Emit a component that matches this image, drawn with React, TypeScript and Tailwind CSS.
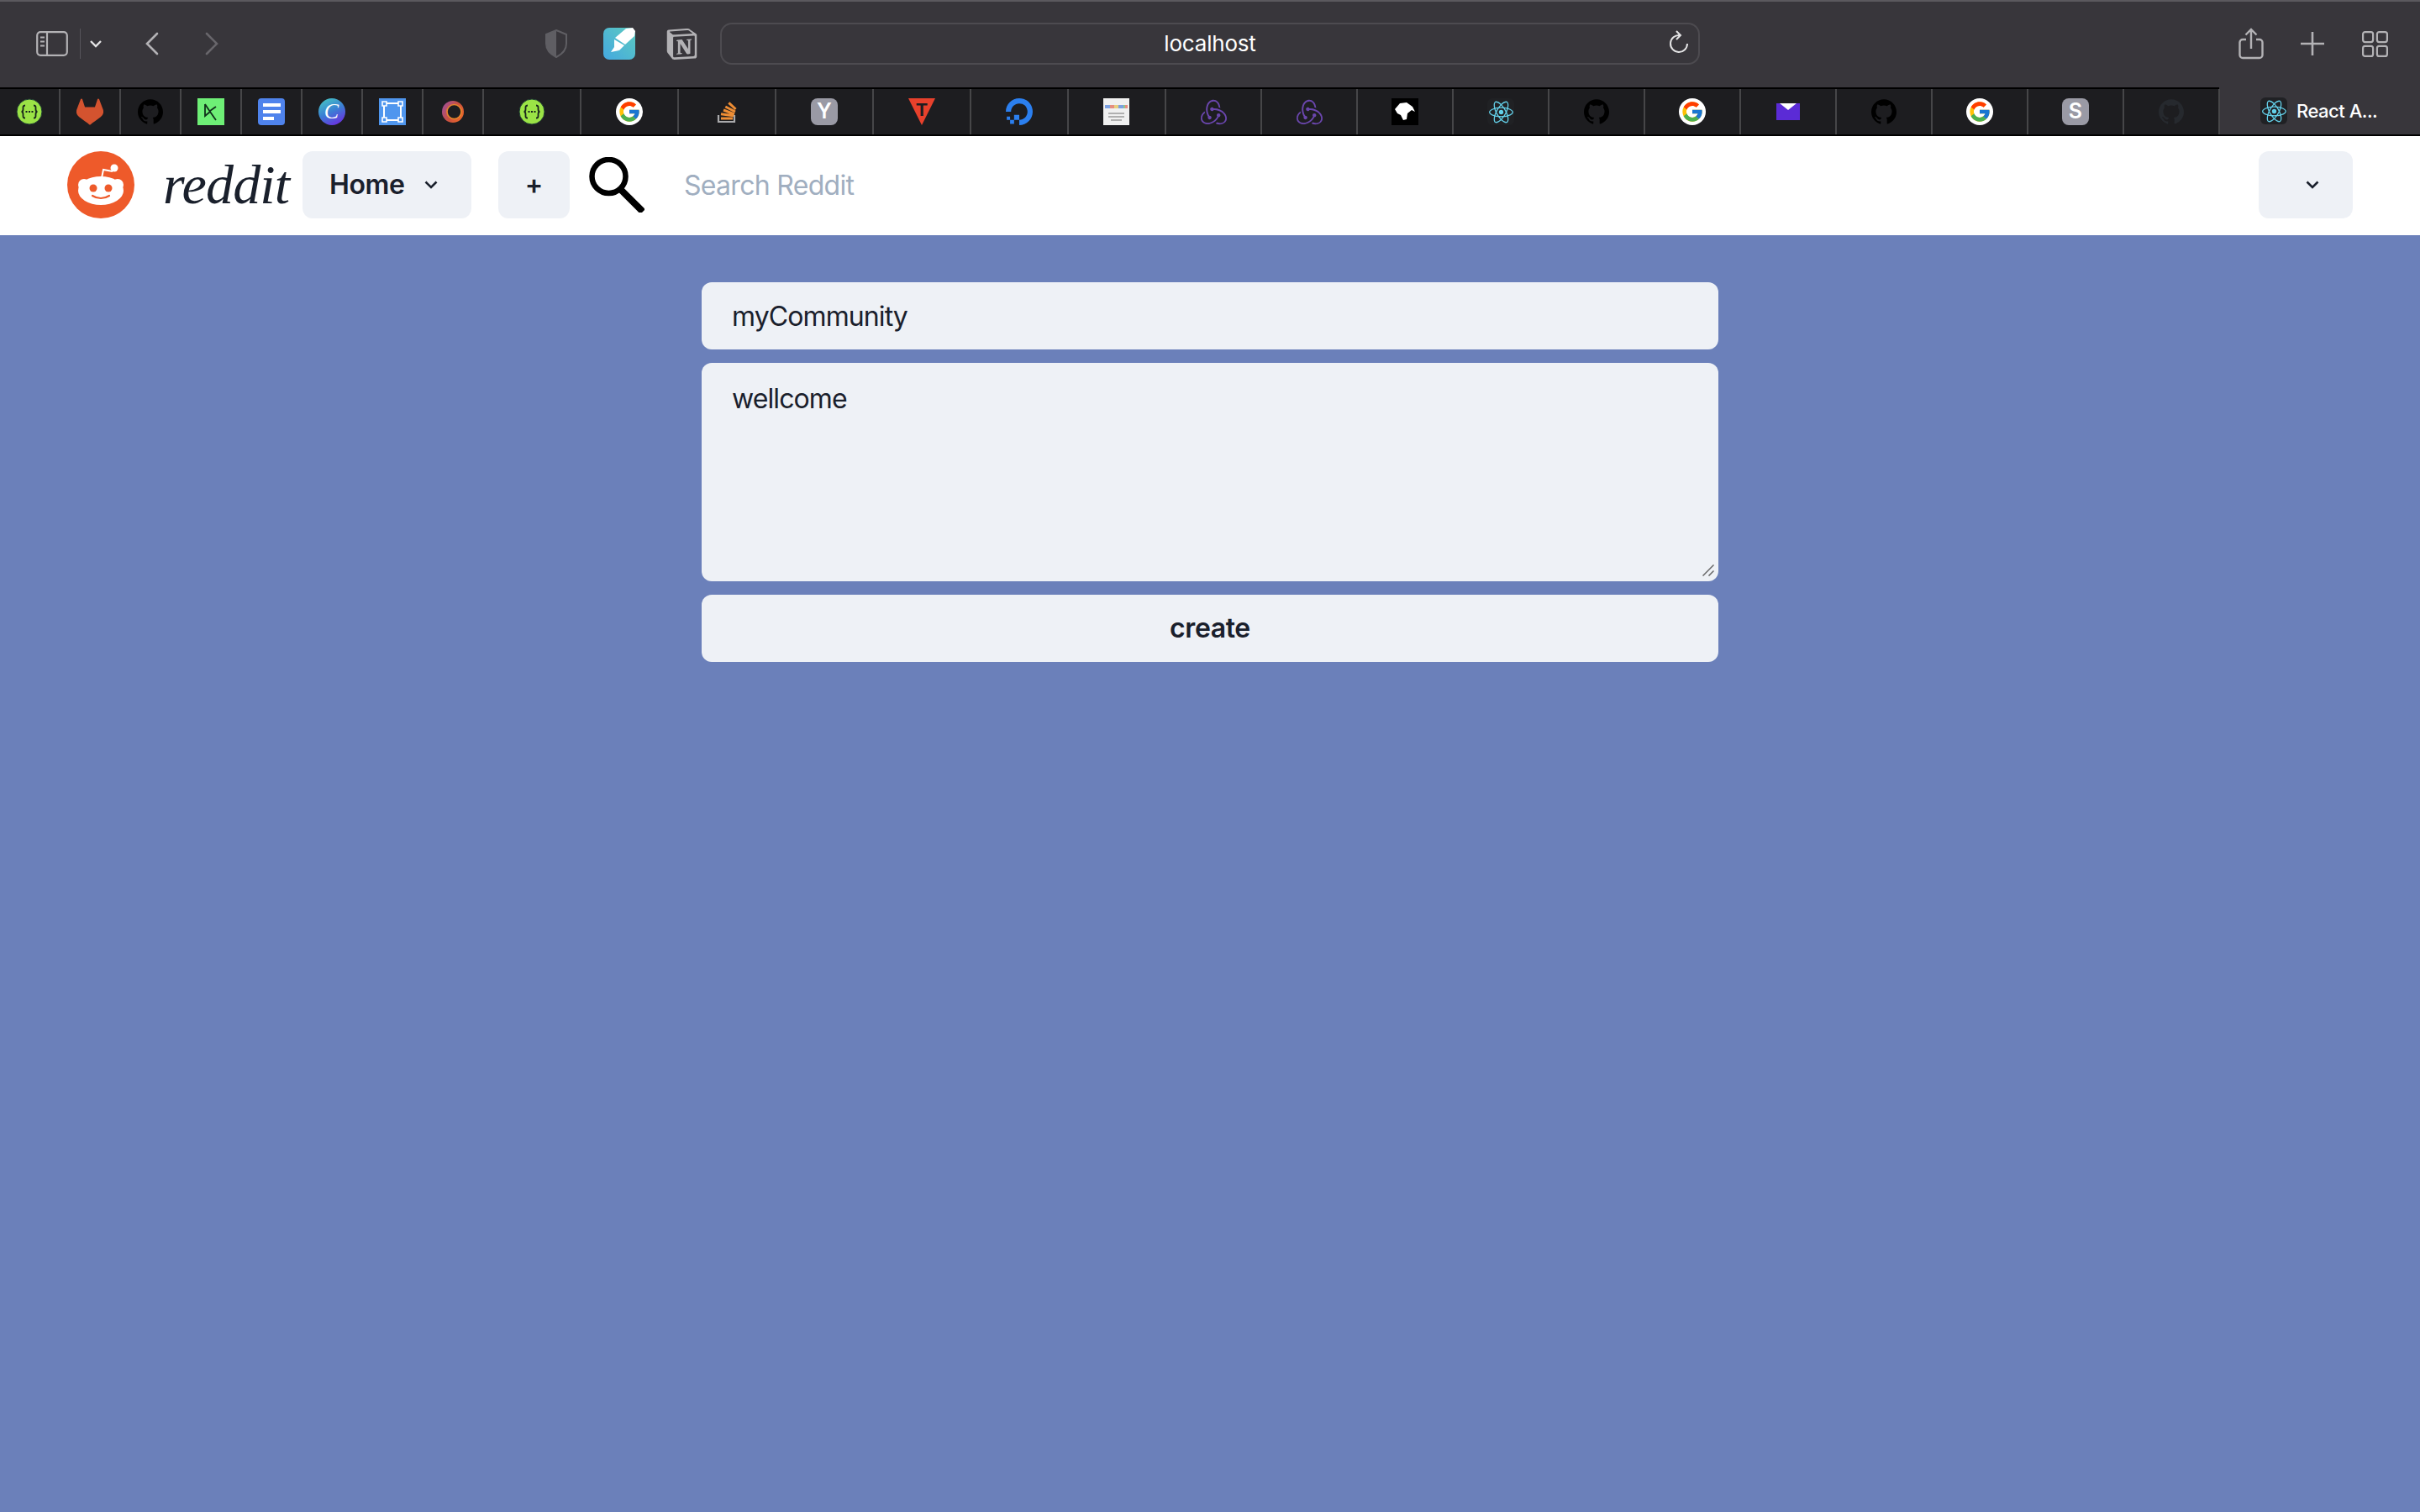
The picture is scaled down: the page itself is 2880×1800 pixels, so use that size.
import React from "react";
import { FcGoogle } from "react-icons/fc";
import { SiDigitalocean, SiGithub, SiGitlab, SiNotion, SiReact, SiRedux } from "react-icons/si";

const fieldClass =
  "block w-full rounded-xl bg-[#eef1f6] px-9 text-[32px] tracking-[-0.9px] text-[#1a202c] outline-none";

const Google = () => (
  <div className="flex h-8 w-8 items-center justify-center rounded-full bg-white">
    <FcGoogle size={28} />
  </div>
);

const Letter = ({ children }: { children: string }) => (
  <div className="flex h-8 w-8 items-center justify-center rounded-lg bg-[#9a9aa5] text-[25px] font-semibold text-white">
    {children}
  </div>
);

const Swagger = () => (
  <svg width="32" height="32" viewBox="0 0 32 32">
    <circle cx="16" cy="16" r="15" fill="#9be346" stroke="#1e3a34" strokeWidth="1" />
    <path
      d="M11 8.500c-3 0-2.500 2-2.500 4.500 0 2-.5 3-2 3 1.500 0 2 1 2 3 0 2.500-.5 4.500 2.500 4.500M21 8.500c3 0 2.500 2 2.500 4.500 0 2 .5 3 2 3-1.500 0-2 1-2 3 0 2.500.5 4.500-2.500 4.500"
      fill="none"
      stroke="#18231c"
      strokeWidth="1.800"
    />
    <path d="M11.500 15h2v2h-2zM15 15h2v2h-2zM18.500 15h2v2h-2z" fill="#18231c" />
  </svg>
);

const Github = ({ color = "#000000" }: { color?: string }) => <SiGithub size={30} color={color} />;
const Redux = () => <SiRedux size={31} color="#6a46ad" />;

const ReactLogo = () => (
  <div className="flex h-8 w-8 items-center justify-center rounded-md bg-[#202124]">
    <SiReact size={29} color="#63cfe8" />
  </div>
);

const Dk = () => (
  <svg width="32" height="32" viewBox="0 0 32 32">
    <rect width="32" height="32" fill="#6eef76" />
    <path d="M9 7v14l6-5-6-9M15 16l7 10M15 15l7-5" fill="none" stroke="#10301a" strokeWidth="1.8" />
  </svg>
);

const Docs = () => (
  <svg width="32" height="32" viewBox="0 0 32 32">
    <rect width="32" height="32" rx="4" fill="#4f83ec" />
    <path d="M6 6h21v4H6zM6 14h21v4H6zM6 22h13v4H6z" fill="#fff" />
  </svg>
);

const Canva = () => (
  <svg width="32" height="32" viewBox="0 0 32 32">
    <defs>
      <linearGradient id="canva" x1="0.2" y1="0" x2="0.7" y2="1">
        <stop offset="0" stopColor="#45c4c4" />
        <stop offset="0.5" stopColor="#3b7fd4" />
        <stop offset="1" stopColor="#6a2fe0" />
      </linearGradient>
    </defs>
    <circle cx="16" cy="16" r="16" fill="url(#canva)" />
    <text x="15.500" y="24" textAnchor="middle" fontFamily="Liberation Serif" fontStyle="italic" fontSize="26" fill="#fff">
      C
    </text>
  </svg>
);

const Frame = () => (
  <svg width="32" height="32" viewBox="0 0 32 32">
    <rect width="32" height="32" fill="#4f96ee" />
    <rect x="6" y="6" width="20" height="20" fill="none" stroke="#fff" strokeWidth="2" />
    <path d="M4 4h5v5H4zM23 4h5v5h-5zM4 23h5v5H4zM23 23h5v5h-5z" fill="#4f96ee" stroke="#fff" strokeWidth="1.600" />
  </svg>
);

const Ring = () => (
  <svg width="32" height="32" viewBox="0 0 32 32">
    <defs>
      <linearGradient id="ring" x1="0" y1="0" x2="1" y2="0.6">
        <stop offset="0" stopColor="#9a4fa8" />
        <stop offset="0.6" stopColor="#c9503f" />
        <stop offset="1" stopColor="#e8652c" />
      </linearGradient>
    </defs>
    <circle cx="16" cy="16" r="13" fill="url(#ring)" />
    <circle cx="17.500" cy="16" r="8.500" fill="#1d1d20" stroke="#e8872c" strokeWidth="1.600" />
  </svg>
);

const Stack = () => (
  <svg width="32" height="32" viewBox="0 0 32 32">
    <path d="M6 20v8h19v-8" fill="none" stroke="#a9a9ab" strokeWidth="2.200" />
    <path d="M9 24h14M9 18.700l15 2M12 14l13 5M14.300 10L26 16M18.300 5.300l8.300 7.700" fill="none" stroke="#ee8d34" strokeWidth="3" />
  </svg>
);

const TriangleT = () => (
  <svg width="32" height="32" viewBox="0 0 32 32">
    <path d="M0 0h32L16 32z" fill="#e8412c" />
    <text x="16" y="20.500" textAnchor="middle" fontFamily="Liberation Sans" fontWeight="700" fontSize="22" fill="#1d1d20">
      T
    </text>
  </svg>
);

const CustomSearch = () => (
  <svg width="32" height="32" viewBox="0 0 32 32">
    <rect width="31" height="32" fill="#f0f0f0" />
    <path d="M2 10h6" stroke="#7ca0e0" strokeWidth="4" />
    <path d="M8 10h5" stroke="#e58d80" strokeWidth="4" />
    <path d="M13 10h5" stroke="#e8cf7e" strokeWidth="4" />
    <path d="M18 10h6" stroke="#7ca0e0" strokeWidth="4" />
    <path d="M24 10h2" stroke="#8cc890" strokeWidth="4" />
    <path d="M26 10h3" stroke="#e58d80" strokeWidth="4" />
    <path d="M6 18h19M6 22h19M9 26h13" stroke="#b0b0b0" strokeWidth="2" />
  </svg>
);

const Silhouette = () => (
  <svg width="32" height="32" viewBox="0 0 32 32">
    <rect width="32" height="32" fill="#000" />
    <path d="M4 13l6-7 8-1 7 5 3 6-4-2-5 4-1 7-4 1-3-6-4-2z" fill="#fff" />
  </svg>
);

const Mail = () => (
  <svg width="32" height="32" viewBox="0 0 32 32">
    <rect x="2" y="6" width="28" height="20" fill="#5b2bd6" />
    <path d="M6 6h20l-10 8z" fill="#fff" />
  </svg>
);

const wide = "w-[116px]";
const mid = "w-[114px]";
const narrow = "w-[72px]";

const tabs: { width: string; icon: React.ReactNode }[] = [
  { width: narrow, icon: <Swagger /> },
  { width: narrow, icon: <SiGitlab size={32} color="#d4532f" /> },
  { width: narrow, icon: <Github /> },
  { width: narrow, icon: <Dk /> },
  { width: narrow, icon: <Docs /> },
  { width: narrow, icon: <Canva /> },
  { width: narrow, icon: <Frame /> },
  { width: narrow, icon: <Ring /> },
  { width: wide, icon: <Swagger /> },
  { width: wide, icon: <Google /> },
  { width: wide, icon: <Stack /> },
  { width: wide, icon: <Letter>Y</Letter> },
  { width: wide, icon: <TriangleT /> },
  { width: wide, icon: <SiDigitalocean size={32} color="#2b7fef" /> },
  { width: wide, icon: <CustomSearch /> },
  { width: mid, icon: <Redux /> },
  { width: mid, icon: <Redux /> },
  { width: mid, icon: <Silhouette /> },
  { width: mid, icon: <ReactLogo /> },
  { width: mid, icon: <Github /> },
  { width: mid, icon: <Google /> },
  { width: mid, icon: <Mail /> },
  { width: mid, icon: <Github /> },
  { width: mid, icon: <Google /> },
  { width: mid, icon: <Letter>S</Letter> },
  { width: mid, icon: <Github color="#26292e" /> },
];

const Chevron = ({ className }: { className?: string }) => (
  <svg width="16" height="10" viewBox="0 0 16 10" className={className}>
    <path d="M1.500 1.500L8 8l6.500-6.500" fill="none" stroke="#1a202c" strokeWidth="2.600" />
  </svg>
);

const Toolbar = () => (
  <div className="flex h-[104px] items-center border-t-2 border-[#5b595e] bg-[#38363b] pb-[2px] text-[#b3b2b5]">
    {/* sidebar toggle */}
    <svg width="38" height="30" viewBox="0 0 38 30" className="ml-[43px]" fill="none" stroke="currentColor" strokeWidth="2.200">
      <rect x="1.200" y="1.200" width="35.600" height="27.600" rx="4" />
      <path d="M13 1v28M5 7.500h5M5 12.500h5M5 17.500h5" />
    </svg>
    <div className="ml-[14px] h-9 w-px bg-[#56545a]" />
    <svg width="14" height="9" viewBox="0 0 14 9" className="ml-[11px]" fill="none" stroke="#e4e4e5" strokeWidth="2.400">
      <path d="M1 1l6 6 6-6" />
    </svg>
    <svg width="16" height="28" viewBox="0 0 16 28" className="ml-[52px]" fill="none" stroke="currentColor" strokeWidth="2.600" strokeLinecap="round">
      <path d="M14 2L2 14l12 12" />
    </svg>
    <svg width="16" height="28" viewBox="0 0 16 28" className="ml-[55px]" fill="none" stroke="#68666b" strokeWidth="2.600" strokeLinecap="round">
      <path d="M2 2l12 12L2 26" />
    </svg>
    {/* shield */}
    <svg width="28" height="34" viewBox="0 0 28 34" className="ml-[388px]">
      <path d="M14 1l12 5v11c0 8-6 13-12 16C8 30 2 25 2 17V6z" fill="none" stroke="#5f5e63" strokeWidth="2" />
      <path d="M14 1L2 6v11c0 8 6 13 12 16z" fill="#5f5e63" />
    </svg>
    {/* markup extension */}
    <svg width="38" height="38" viewBox="0 0 38 38" className="ml-[42px]">
      <defs>
        <linearGradient id="markup" x1="1" y1="0" x2="0" y2="1">
          <stop offset="0" stopColor="#5ccbc0" />
          <stop offset="1" stopColor="#45a8e0" />
        </linearGradient>
      </defs>
      <rect width="38" height="38" rx="7" fill="url(#markup)" />
      <path d="M27 1l8-1 3 4-1 6-11 10-12-8z" fill="#fff" />
      <path d="M13 14l12 7-6 6-6-3z" fill="#fff" />
      <path d="M13 23l6 4-10 2z" fill="#fff" />
    </svg>
    <SiNotion size={37} className="ml-[37px]" />
    {/* address bar */}
    <div className="relative ml-[27px] flex h-[50px] w-[1166px] items-center justify-center rounded-[14px] border-2 border-[#4d4b50] pb-[2px]">
      <span className="text-[26px] tracking-[-0.2px] text-white">localhost</span>
      <svg width="24" height="28" viewBox="0 0 24 28" className="absolute right-[11px] top-[7px]" fill="none" stroke="#e4e4e5" strokeWidth="2">
        <path d="M13 6a10 10 0 1 0 9 10" />
        <path d="M9 1l5 5-5 5" />
      </svg>
    </div>
    <div className="ml-auto flex items-center">
      <svg width="30" height="38" viewBox="0 0 30 38" fill="none" stroke="currentColor" strokeWidth="2.400">
        <path d="M9 14H5a3.500 3.500 0 0 0-3.500 3.500v15A3.500 3.500 0 0 0 5 36h20a3.500 3.500 0 0 0 3.500-3.500v-15A3.500 3.500 0 0 0 25 14h-4" />
        <path d="M15 25V2M8.500 8.500L15 2l6.500 6.500" />
      </svg>
      <svg width="28" height="28" viewBox="0 0 28 28" className="ml-[44px]" stroke="currentColor" strokeWidth="2.600">
        <path d="M14 0v28M0 14h28" />
      </svg>
      <svg width="31" height="31" viewBox="0 0 31 31" className="ml-[45px] mr-[38px]" fill="none" stroke="currentColor" strokeWidth="2.200">
        <rect x="1.100" y="1.100" width="12" height="12" rx="2.500" />
        <rect x="17.900" y="1.100" width="12" height="12" rx="2.500" />
        <rect x="1.100" y="17.900" width="12" height="12" rx="2.500" />
        <rect x="17.900" y="17.900" width="12" height="12" rx="2.500" />
      </svg>
    </div>
  </div>
);

const TabBar = () => (
  <div className="flex h-[58px] border-b-2 border-black bg-[#38363b]">
    <div className="flex h-full w-[2641px] border-t-2 border-black bg-[#1d1d20]">
      {tabs.map((tab, index) => (
        <div key={index} className={`flex shrink-0 items-center justify-center border-r-2 border-[#464648] ${tab.width}`}>
          {tab.icon}
        </div>
      ))}
    </div>
    <div className="flex flex-1 items-center pl-[49px]">
      <ReactLogo />
      <span className="ml-[11px] text-[22px] font-medium tracking-[-0.5px] text-white">React A...</span>
    </div>
  </div>
);

const RedditLogo = () => (
  <svg width="80" height="80" viewBox="0 0 80 80" className="shrink-0">
    <circle cx="40" cy="40" r="40" fill="#ee5a2a" />
    <path d="M40 37l3-15 11 2" fill="none" stroke="#fff" strokeWidth="2" />
    <circle cx="56" cy="20" r="4.500" fill="#fff" />
    <circle cx="20" cy="40" r="7" fill="#fff" />
    <circle cx="60" cy="40" r="7" fill="#fff" />
    <ellipse cx="40" cy="47" rx="27" ry="17" fill="#fff" />
    <circle cx="31" cy="44" r="4.500" fill="#ee5a2a" />
    <circle cx="49" cy="44" r="4.500" fill="#ee5a2a" />
    <path d="M30 53c6 4 14 4 20 0" fill="none" stroke="#ee5a2a" strokeWidth="2.200" strokeLinecap="round" />
  </svg>
);

const Navbar = () => (
  <div className="flex items-center bg-white pb-5 pl-20 pr-20 pt-[18px] text-[#1a202c]">
    <RedditLogo />
    <div className="ml-[34px] w-[166px] font-['Liberation_Serif',serif] text-[66px] italic leading-[80px] tracking-[-0.8px]">reddit</div>
    <button className="flex h-20 w-[201px] shrink-0 items-center rounded-xl bg-[#eef1f6] pl-[32px] text-[32px] font-semibold tracking-[-0.4px]">
      Home
      <Chevron className="ml-[24px]" />
    </button>
    <button className="ml-[32px] flex h-20 w-[85px] shrink-0 items-center justify-center rounded-xl bg-[#eef1f6] text-[32px] font-semibold">
      +
    </button>
    <svg width="66" height="66" viewBox="0 0 66 66" className="ml-[23px] shrink-0" fill="none" stroke="#000">
      <circle cx="23.500" cy="23" r="20" strokeWidth="6.500" />
      <path d="M37 38l27 27" strokeWidth="8" />
    </svg>
    <input
      placeholder="Search Reddit"
      className="ml-[47px] h-20 flex-1 bg-transparent text-[32px] tracking-[-0.7px] outline-none placeholder:text-[#a0aec0]"
    />
    <button className="flex h-20 w-[112px] shrink-0 items-center justify-center rounded-xl bg-[#eef1f6] pl-4">
      <Chevron />
    </button>
  </div>
);

export default function App() {
  return (
    <div className="flex h-screen flex-col bg-[#6b80ba] font-['Inter',sans-serif]">
      <Toolbar />
      <TabBar />
      <Navbar />
      <div className="mx-auto mt-14 flex w-[1210px] flex-col gap-4">
        <input className={`${fieldClass} h-20`} defaultValue="myCommunity" />
        <div className="relative">
          <textarea className={`${fieldClass} h-[260px] resize-none py-[22px] leading-[42px]`} defaultValue="wellcome" />
          {/* resize grip */}
          <svg width="14" height="14" viewBox="0 0 14 14" className="absolute bottom-[6px] right-[5px]" stroke="#666" strokeWidth="1.500">
            <path d="M0.500 13.500l13-13M7.500 13.500l6-6" />
          </svg>
        </div>
        <button className="h-20 rounded-xl bg-[#eef1f6] text-[32px] font-semibold tracking-[-0.4px] text-[#1a202c]">create</button>
      </div>
    </div>
  );
}
